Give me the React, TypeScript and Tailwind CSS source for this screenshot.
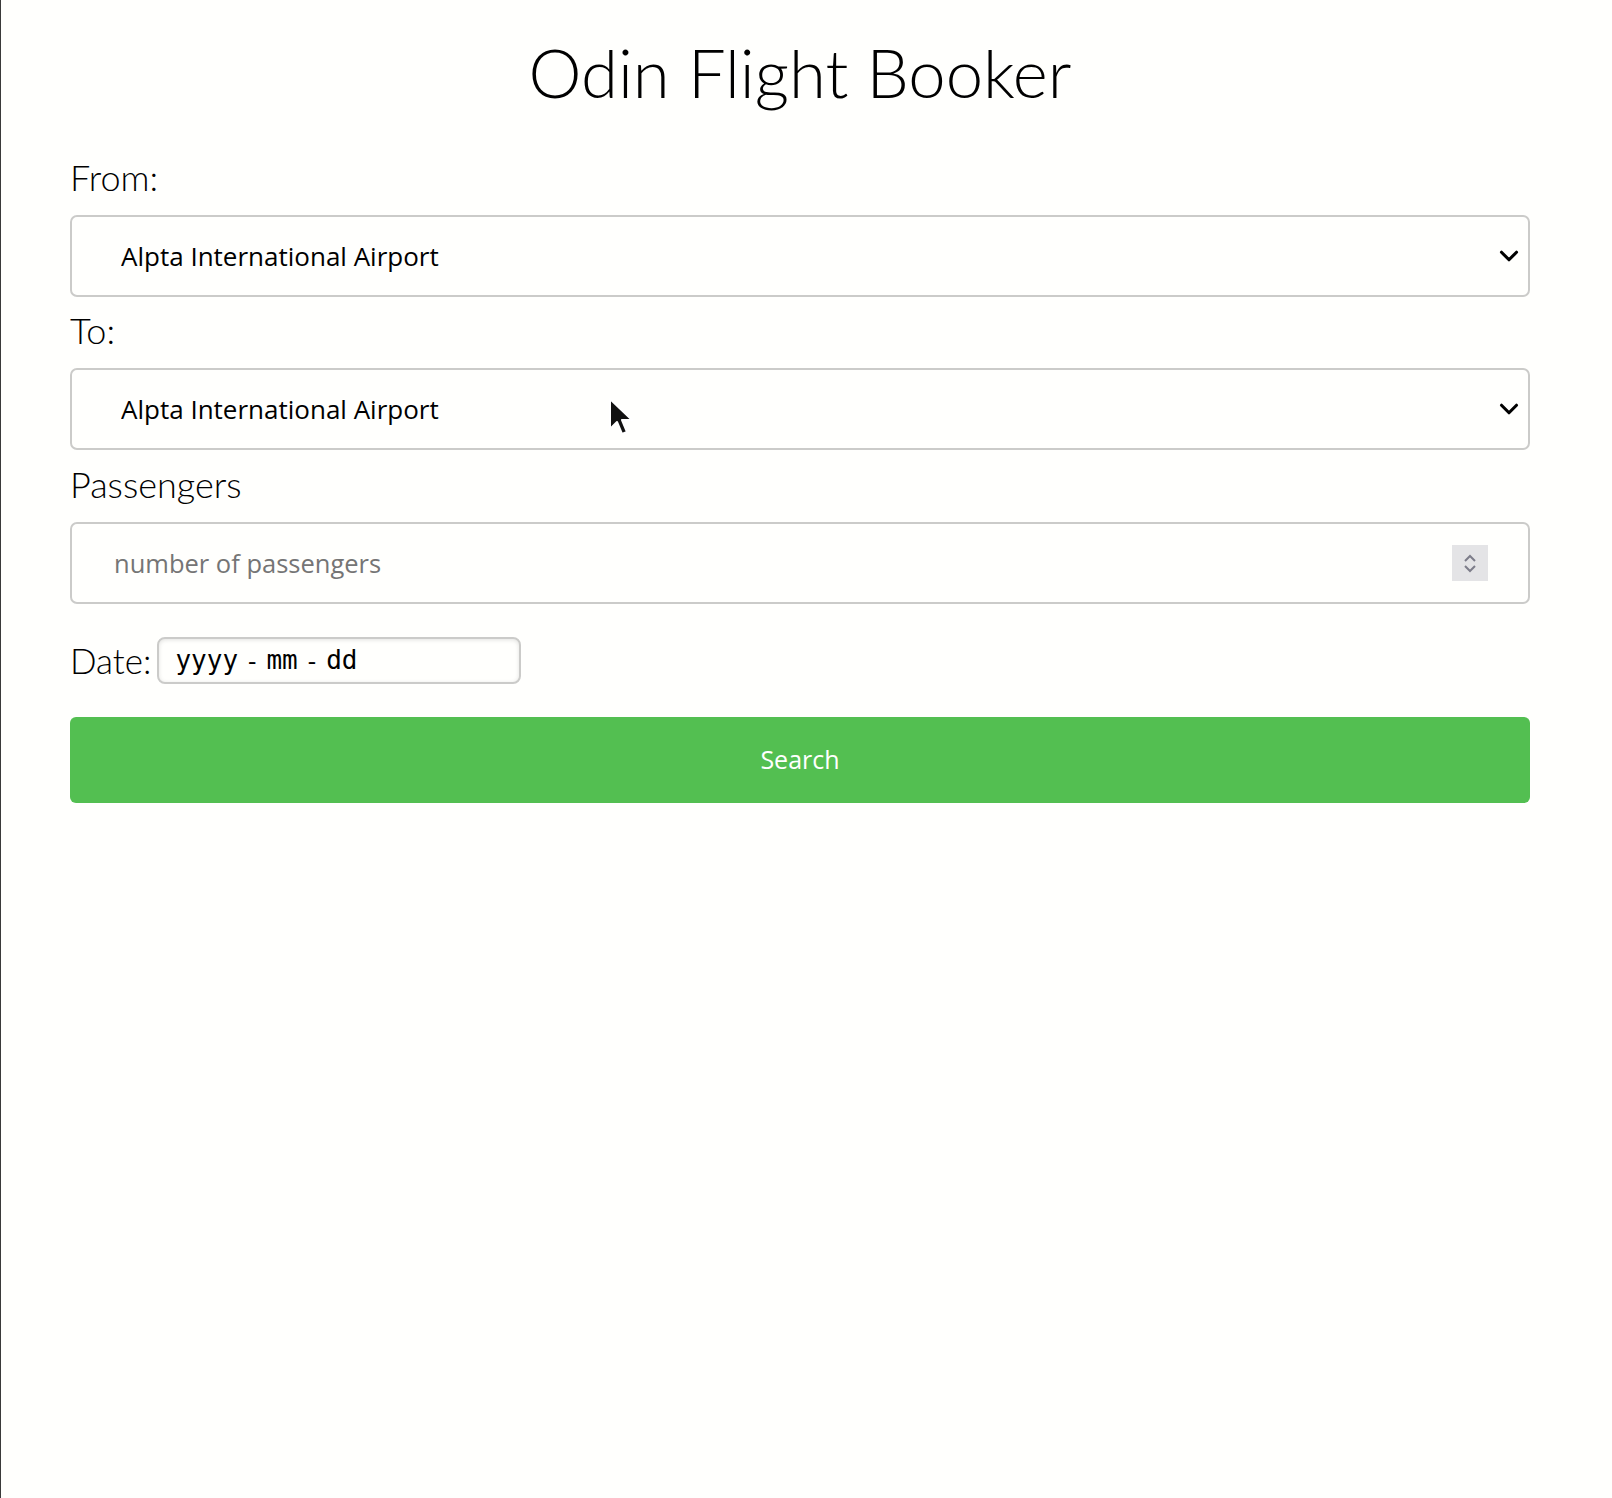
import { ChevronDown } from 'lucide-react';

const airports = ['Alpta International Airport', 'Beta Regional Airport', 'Gamma Airfield'];

function SelectField({ label, first }: { label: string, first?: boolean }) {
    return (<>
        <label className={"block text-[36px] leading-[40px] font-light text-black mb-[18px] " + (first ? "mt-0" : "mt-[13px]")}>{label}</label>
        <div className="relative">
            <select className="w-full h-[82px] appearance-none rounded-[7px] border-2 border-[#cbcbc9] bg-[#fffffd] pl-[49px] text-[26px] text-black font-['Open_Sans',sans-serif] outline-none">
                {airports.map(a => <option key={a}>{a}</option>)}
            </select>
            <ChevronDown className="absolute right-[6px] top-[26px] w-[30px] h-[30px] text-black pointer-events-none" strokeWidth={2.5} />
        </div>
    </>);
}

function Cursor() {
    return (
        <svg className="absolute left-[607px] top-[397px] pointer-events-none" width="28" height="42" viewBox="0 0 14 21">
            <path d="M1 1 L1 16 L4.5 12.5 L7 18.5 L9.5 17.5 L7 11.5 L12 11.5 Z" fill="#111" stroke="#fff" strokeWidth="1" strokeLinejoin="round" />
        </svg>
    );
}

export default function App() {
    return (
        <div className="relative min-h-[1498px] bg-[#fffffd] border-l border-[#3a3a3a] font-['Lato',sans-serif]">
            <div className="w-[1460px] ml-[69px] pt-[30px]">
                <h1 className="text-center text-[67px] leading-[84px] font-light text-black">Odin Flight Booker</h1>
                <div className="mt-[43px]">
                    <SelectField label="From:" first />
                    <SelectField label="To:" />
                    <label className="block text-[36px] leading-[40px] font-light text-black mt-[14px] mb-[18px]">Passengers</label>
                    <div className="relative">
                        <input type="text" placeholder="number of passengers" className="w-full h-[82px] rounded-[7px] border-2 border-[#cbcbc9] bg-[#fffffd] pl-[42px] text-[25.5px] font-['Open_Sans',sans-serif] placeholder:text-[#757575] outline-none" />
                        <div className="absolute right-[42px] top-[23px] w-[36px] h-[36px] bg-[#e4e4e6] flex flex-col items-center justify-center gap-[1px]">
                            <svg width="14" height="9" viewBox="0 0 14 9"><path d="M2 7 L7 2 L12 7" fill="none" stroke="#7d7d8a" strokeWidth="2" /></svg>
                            <svg width="14" height="9" viewBox="0 0 14 9"><path d="M2 2 L7 7 L12 2" fill="none" stroke="#7d7d8a" strokeWidth="2" /></svg>
                        </div>
                    </div>
                    <div className="flex items-center mt-[30px]">
                        <span className="text-[35px] font-light text-black mr-[6px]">Date:</span>
                        <div className="w-[364px] h-[47px] rounded-[8px] border-2 border-[#cbcbc9] bg-[#fffffd] shadow-[inset_0_1px_4px_rgba(0,0,0,0.12)] pl-[16px] flex items-center text-[26px] text-black font-['DejaVu_Sans_Mono',monospace]">
                            <span>yyyy</span>
                            <span className="mx-[10px] font-['Open_Sans',sans-serif]">-</span>
                            <span>mm</span>
                            <span className="mx-[10px] font-['Open_Sans',sans-serif]">-</span>
                            <span>dd</span>
                        </div>
                    </div>
                    <button className="w-full h-[86px] mt-[30px] rounded-[6px] bg-[#53bf51] text-white text-[25px] font-['Open_Sans',sans-serif]">Search</button>
                </div>
            </div>
            <Cursor />
        </div>
    );
}
